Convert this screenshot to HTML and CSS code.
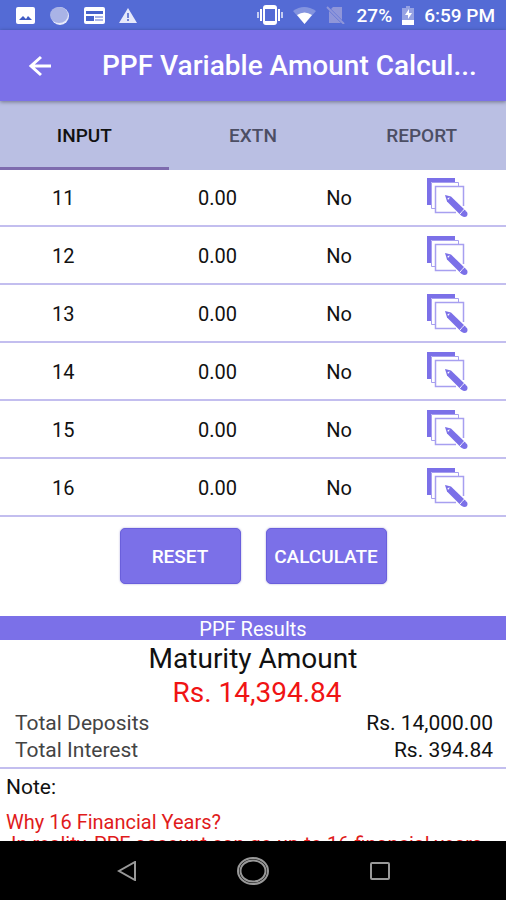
FILE: index.html
```html
<!DOCTYPE html>
<html lang="en">
<head>
  <meta charset="UTF-8" />
  <meta name="viewport" content="width=device-width, initial-scale=1.0" />
  <title>PPF Variable Amount Calculator</title>
  <link rel="stylesheet" href="styles.css">
</head>
<body>
  <div class="status-bar">
    <div class="status-icons">
      <svg width="19" height="18" viewBox="0 0 19 18"><rect width="19" height="17" y="1" rx="2" fill="#fff"/><path d="M3 14l4-4 3 3 2-3 4 4z" fill="#3f5bc4"/></svg>
      <svg width="21" height="19" viewBox="0 0 21 19"><ellipse cx="11" cy="10" rx="9" ry="9" fill="#e8ebfb"/><ellipse cx="10" cy="9" rx="9" ry="8" fill="#a9b3e6"/></svg>
      <svg width="21" height="18" viewBox="0 0 21 18"><rect y="1" width="21" height="17" rx="2" fill="#fff"/><path d="M2 5h17v3H2zM2 10h8v5H2z" fill="#4763cb"/><path d="M11 10h8v2h-8zM11 13h8v2h-8z" fill="#aab6e8"/></svg>
      <svg width="18" height="18" viewBox="0 0 18 18"><path d="M9 2l9 15H0z" fill="#e6e9fb"/><path d="M8 7h2v5H8zM8 13h2v2H8z" fill="#6f82d6"/></svg>
    </div>
    <div class="status-info">
      <svg width="26" height="20" viewBox="0 0 26 20" fill="none" stroke="#fff" stroke-width="2"><rect x="7" y="1" width="12" height="18" rx="2"/><path d="M8 3h10M8 17h10M4 4v12M22 4v12"/><path d="M1 7v6M25 7v6" stroke="#c5cdf2"/></svg>
      <svg width="23" height="18" viewBox="0 0 23 18"><path d="M0 5Q11-3 23 5L11.500 18z" fill="#8494df"/><path d="M4 9q7.500-5 15 0l-7.500 9z" fill="#fff"/></svg>
      <svg class="no-sim" width="19" height="18" viewBox="0 0 19 18"><path d="M7 1h9v13L5 3zM3 5l12 12H3z" fill="#8f96d9"/><path d="M1 1l17 17" stroke="#8f96d9" stroke-width="2"/></svg>
      <span>27%</span>
      <svg width="12" height="19" viewBox="0 0 12 19"><path d="M4 0h4v2h4v12H0V2h4z" fill="#96a2e3"/><path d="M0 14h12v5H0z" fill="#fff"/><path d="M7 3L3 9h3v4l4-6H7z" fill="#fff"/></svg>
      <span>6:59 PM</span>
    </div>
  </div>

  <header class="app-bar">
    <button class="back" aria-label="Back">
      <svg width="24" height="22" viewBox="0 0 24 22" fill="none" stroke="#fff" stroke-width="3"><path d="M23 11H3M13 2L3 11l10 9"/></svg>
    </button>
    <h1>PPF Variable Amount Calcul...</h1>
  </header>

  <nav class="tabs">
    <button class="tab active">INPUT</button>
    <button class="tab">EXTN</button>
    <button class="tab">REPORT</button>
  </nav>

  <main>
    <table class="years">
      <tbody id="yearRows"></tbody>
    </table>

    <div class="actions">
      <button>RESET</button>
      <button>CALCULATE</button>
    </div>

    <section class="results">
      <h2>PPF Results</h2>
      <div class="maturity">Maturity Amount</div>
      <div class="maturity amount">Rs. 14,394.84</div>
      <div class="total"><span>Total Deposits</span><span class="value">Rs. 14,000.00</span></div>
      <div class="total"><span>Total Interest</span><span class="value">Rs. 394.84</span></div>
    </section>

    <section class="note">
      <h3>Note:</h3>
      <p>Why 16 Financial Years?<br>&nbsp;In reality, PPF account can go up to 16 financial years</p>
    </section>
  </main>

  <footer class="nav-bar">
    <button aria-label="Back"><svg width="20" height="20" viewBox="0 0 20 20"><path d="M18 1v18L2 10z"/></svg></button>
    <button aria-label="Home"><svg width="32" height="28" viewBox="0 0 32 28"><ellipse cx="16" cy="14" rx="15" ry="13"/><ellipse cx="16" cy="14" rx="12.500" ry="10.500"/></svg></button>
    <button aria-label="Recent apps"><svg width="20" height="18" viewBox="0 0 20 18"><rect x="1" y="1" width="18" height="16" rx="1"/></svg></button>
  </footer>

  <script>
    const years = [
      { year: 11, amount: '0.00', paid: 'No' },
      { year: 12, amount: '0.00', paid: 'No' },
      { year: 13, amount: '0.00', paid: 'No' },
      { year: 14, amount: '0.00', paid: 'No' },
      { year: 15, amount: '0.00', paid: 'No' },
      { year: 16, amount: '0.00', paid: 'No' }
    ];

    const editIcon = `
      <svg width="42" height="40" viewBox="0 0 42 40">
        <path d="M0 0h28v4H4v23H0z" fill="#7b70e8"/>
        <path d="M28 4.500h3.500V8M4.500 27v3.500H9M4.500 27V4.500H28" fill="none" stroke="#a79ff0"/>
        <path d="M36.500 28V8.500h-28v26H29" fill="none" stroke="#a79ff0" stroke-width="1.500"/>
        <path d="M18 17l6 1.500 15 14.500-4.500 5L20 23.500z" fill="#7b70e8"/>
        <path d="M20.500 20l2.500-.5-2 2.500z" fill="#fff"/>
        <path d="M32.500 36.500l5-5.500" stroke="#fff"/>
        <circle cx="37.500" cy="36" r="3" fill="#7b70e8"/>
      </svg>`;

    document.getElementById('yearRows').innerHTML = years.map(item => `
      <tr>
        <td class="year">${item.year}</td>
        <td class="deposit">${item.amount}</td>
        <td class="paid">${item.paid}</td>
        <td class="edit"><button aria-label="Edit year ${item.year}">${editIcon}</button></td>
      </tr>
    `).join('');
  </script>
</body>
</html>
```

FILE: styles.css
```css
* { margin: 0; padding: 0; box-sizing: border-box; }
body {
  font-family: Roboto, sans-serif;
  font-size: 20px;
  background: #fff;
  color: #111;
  height: 100vh;
  display: flex;
  flex-direction: column;
  overflow: hidden;
}
button {
  font-family: inherit;
  background: none;
  border: none;
  cursor: pointer;
}
svg {
  display: block;
}
.status-bar {
  flex: none;
  height: 30px;
  padding: 0 11px 0 16px;
  display: flex;
  justify-content: space-between;
  align-items: center;
  background: #546bd5;
  color: #fff;
  font-size: 19px;
  font-weight: 500;
}
.status-icons {
  display: flex;
  align-items: center;
  gap: 14px;
}
.status-info {
  display: flex;
  align-items: center;
  gap: 10px;
}
.no-sim {
  margin-right: 2px;
}
.app-bar {
  flex: none;
  height: 71px;
  padding: 0 28px;
  display: flex;
  align-items: center;
  gap: 50px;
  background: #7b70e8;
  color: #fff;
  box-shadow: 0 1px 4px rgba(0,0,0,0.4);
  z-index: 2;
}
.app-bar h1 {
  flex: 1;
  font-size: 28px;
  font-weight: 500;
  white-space: nowrap;
  overflow: hidden;
  text-overflow: ellipsis;
}
.tabs {
  flex: none;
  height: 69px;
  display: flex;
  background: #babfe3;
  z-index: 1;
}
.tab {
  flex: 1;
  padding-top: 3px;
  border-bottom: 3px solid transparent;
  font-size: 19px;
  font-weight: 500;
  color: #4c4e64;
}
.tab.active {
  color: #111;
  border-bottom-color: #7e6bae;
}
main {
  flex: 1;
  min-height: 0;
  overflow: hidden;
}
.years {
  width: 100%;
  margin-top: -1px;
  table-layout: fixed;
  border-collapse: separate;
  border-spacing: 0;
}
.years td {
  height: 58px;
  padding-top: 2px;
  border-bottom: 2px solid #c3beef;
  text-align: center;
}
.year { width: 25%; }
.deposit { width: 36%; }
.paid { width: 12%; }
.years .edit {
  padding-left: 20px;
}
.edit button {
  display: block;
  margin: 0 auto;
}
.actions {
  display: flex;
  justify-content: center;
  gap: 25px;
  padding: 11px 0 32px;
}
.actions button {
  width: 121px;
  height: 56px;
  background: #7b70e8;
  border: 1px solid #6a5fdc;
  border-radius: 5px;
  box-shadow: 0 0 2px rgba(80,70,180,0.5);
  color: #fff;
  font-size: 19px;
  font-weight: 500;
}
.results {
  padding-bottom: 3px;
  border-bottom: 2px solid #c3beef;
}
.results h2 {
  margin-bottom: 2px;
  padding-top: 2px;
  background: #7b70e8;
  color: #fff;
  font-size: 20px;
  font-weight: 400;
  line-height: 22px;
  text-align: center;
}
.maturity {
  font-size: 28px;
  line-height: 34px;
  text-align: center;
}
.amount {
  padding-left: 8px;
  color: #f01414;
}
.total {
  display: flex;
  justify-content: space-between;
  padding: 0 13px 0 15px;
  font-size: 21px;
  line-height: 27px;
  color: #444;
}
.value {
  color: #111;
}
.note {
  padding: 5px 6px;
}
.note h3 {
  margin-bottom: 10px;
  font-size: 21px;
  font-weight: 400;
  line-height: 27px;
}
.note p {
  color: #e01b1b;
  font-size: 20px;
  line-height: 22px;
  white-space: nowrap;
}
.nav-bar {
  flex: none;
  height: 59px;
  display: flex;
  justify-content: center;
  background: #000;
}
.nav-bar button {
  width: 25%;
  display: flex;
  justify-content: center;
  align-items: center;
}
.nav-bar svg {
  fill: none;
  stroke: #999;
  stroke-width: 2;
}
```
